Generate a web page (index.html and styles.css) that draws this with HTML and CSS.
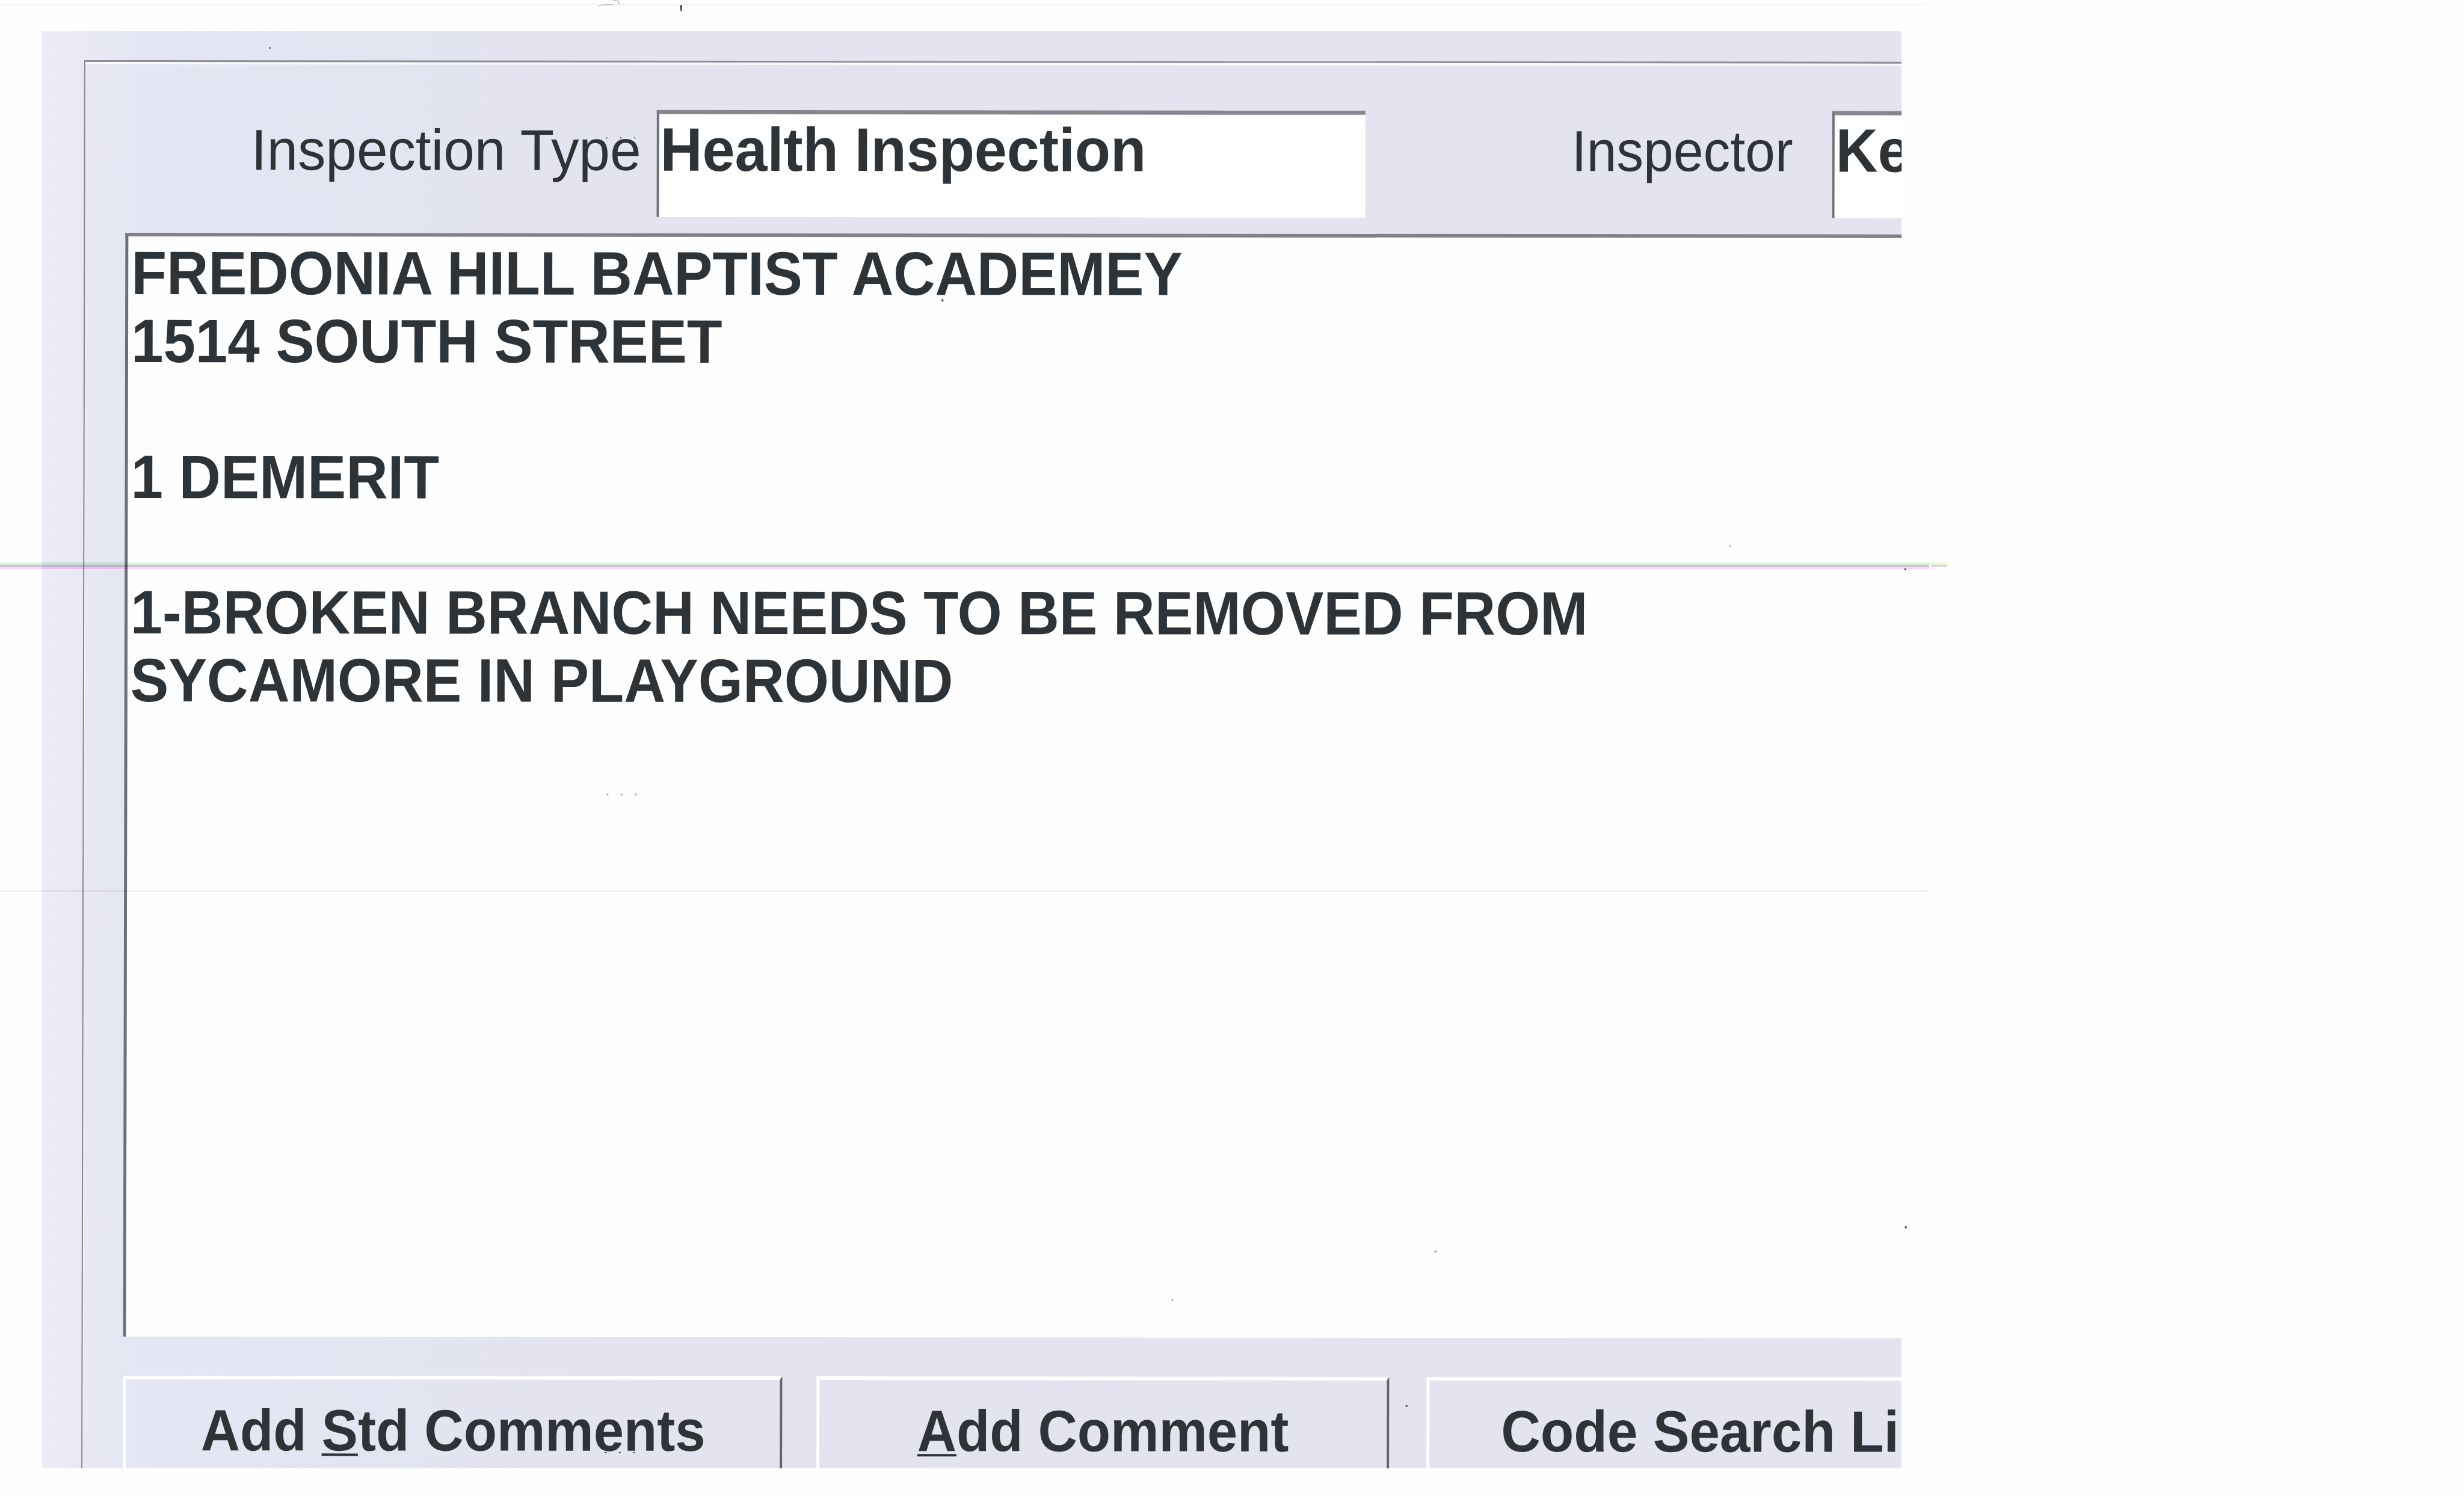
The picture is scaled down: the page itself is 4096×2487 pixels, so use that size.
FILE: index.html
```html
<!DOCTYPE html>
<html>
<head>
    <meta charset="utf-8">
    <title>Inspection Comments</title>
    <link rel="stylesheet" href="styles.css">
</head>
<body>
    <div class="panel">
        <div class="group">
            <div class="fields">
                <label class="label type-label"><span class="text">Inspection Type</span></label>
                <div class="field type-field"><span class="text">Health Inspection</span></div>
                <label class="label inspector-label"><span class="text">Inspector</span></label>
                <div class="field inspector-field"><span class="text">Ke</span></div>
            </div>
            <div class="comments">
                <p><span class="text">FREDONIA HILL BAPTIST ACADEMEY</span></p>
                <p><span class="text">1514 SOUTH STREET</span></p>
                <p></p>
                <p><span class="text">1 DEMERIT</span></p>
                <p></p>
                <p><span class="text tight">1-BROKEN BRANCH NEEDS TO BE REMOVED FROM</span></p>
                <p><span class="text tight">SYCAMORE IN PLAYGROUND</span></p>
            </div>
            <div class="buttons">
                <button class="button std"><span class="text">Add <u>S</u>td Comments</span></button>
                <button class="button add"><span class="text"><u>A</u>dd Comment</span></button>
                <button class="button search"><span class="text">Code Search Li</span></button>
            </div>
        </div>
    </div>
    <div class="streak"></div>
    <div class="streak-end"></div>
    <div class="streak-thin"></div>
    <div class="edge"></div>
    <!-- dust on the page -->
    <svg class="dust" width="4096" height="2487" viewBox="0 0 4200 2550">
        <g fill="#444">
            <path d="M1159 9h4l-1 10h-2z"/>
            <rect x="1605" y="510" width="3" height="4"/>
            <rect x="459" y="80" width="2" height="3"/>
            <rect x="3246" y="969" width="3" height="3"/>
            <rect x="3247" y="2090" width="3" height="4"/>
            <rect x="1033" y="234" width="2" height="2"/>
            <rect x="1057" y="234" width="2" height="2"/>
            <rect x="1081" y="234" width="2" height="2"/>
            <rect x="1031" y="2475" width="3" height="2"/>
            <rect x="1055" y="2475" width="3" height="2"/>
            <rect x="1079" y="2475" width="3" height="2"/>
            <rect x="2396" y="2395" width="3" height="3"/>
        </g>
        <g fill="#aaa">
            <rect x="1034" y="1353" width="3" height="3"/>
            <rect x="1058" y="1353" width="3" height="3"/>
            <rect x="1082" y="1353" width="3" height="3"/>
            <rect x="2445" y="2132" width="4" height="3"/>
            <rect x="1997" y="2215" width="3" height="3"/>
            <rect x="2948" y="929" width="2" height="3"/>
        </g>
        <path d="M1020 10l8-2h18M1045 1l8-1l3 8" fill="none" stroke="#c4c7d8" stroke-width="2"/>
    </svg>
</body>
</html>
```

FILE: styles.css
```css
body {
    margin: 0;
    width: 4096px;
    height: 2487px;
    overflow: hidden;
    position: relative;
    background-color: #fefefe;
    color: #2e3338;
    font-family: "Liberation Sans", Arial, sans-serif;
    font-size: 102px;
}
/* Visible part of the form, everything past its edge is cut off */
.panel {
    box-sizing: border-box;
    width: 3161px;
    height: 2441px;
    padding: 100px 0 0 140px;
    overflow: hidden;
    background: linear-gradient(to right, #fefefe 70px, #ebecf5 70px, #e8e9f4 140px, #e4e6f3 220px, #e3e4f0 900px);
    background-position: 0 52px;
    background-repeat: no-repeat;
}
/* The form sits very slightly crooked on the page */
.group {
    width: 3200px;
    height: 2500px;
    border-top: 3px solid #8f9097;
    border-left: 2px solid #85868c;
    box-shadow: inset 1px 4px 0 #f8f8fd;
    transform: skew(-0.12deg, 0.05deg);
    transform-origin: top left;
}
.text {
    display: inline-block;
    white-space: pre;
    transform: scaleX(0.942);
    transform-origin: left;
}
.tight {
    transform: scaleX(0.934);
}
.fields {
    display: flex;
    box-sizing: border-box;
    height: 284px;
    padding-top: 79px;
}
.label {
    box-sizing: border-box;
    flex: none;
    height: 180px;
    line-height: 133px;
    font-size: 96px;
}
.label .text {
    transform: scaleX(0.966);
}
.type-label {
    width: 950px;
    padding-left: 276px;
}
.inspector-label {
    width: 776px;
    padding-left: 343px;
}
.inspector-label .text {
    transform: scaleX(0.932);
}
.field {
    box-sizing: border-box;
    flex: none;
    height: 178px;
    line-height: 119px;
    background-color: #fff;
    border-top: 7px solid #85878c;
    border-left: 4px solid #6c7077;
    font-weight: bold;
}
.field .text {
    margin-left: 2px;
    transform: scaleX(0.95);
}
.type-field {
    width: 1178px;
}
.inspector-field {
    width: 400px;
}
.comments {
    box-sizing: border-box;
    height: 1835px;
    margin-left: 67px;
    padding: 5px 0 0 5px;
    background-color: #fefefe;
    border-top: 6px solid #808288;
    border-left: 5px solid #6c7077;
    font-weight: bold;
}
.comments p {
    margin: 0;
    height: 112.9px;
    line-height: 112.9px;
}
.buttons {
    display: flex;
    padding: 65px 0 0 67px;
}
.button {
    box-sizing: border-box;
    flex: none;
    height: 175px;
    margin-right: 57px;
    padding: 0;
    background: none;
    border: 0 solid #fff;
    border-top-width: 6px;
    border-left-width: 5px;
    border-right: 4px solid #62656b;
    color: inherit;
    font: bold 97px/169px "Liberation Sans", Arial, sans-serif;
}
.button .text {
    transform: scaleX(0.932);
    transform-origin: center;
}
.button u {
    text-decoration-thickness: 4px;
    text-underline-offset: 5px;
    text-decoration-skip-ink: none;
}
.std {
    width: 1096px;
}
.add {
    width: 952px;
    margin-right: 62px;
}
.search {
    width: 1200px;
    margin-right: 0;
    padding-left: 119px;
    text-align: left;
}
.search .text {
    transform: scaleX(0.937);
    transform-origin: left;
}
/* Scanner lines across the page */
.streak, .streak-end, .streak-thin, .edge, .dust {
    position: absolute;
    left: 0;
}
.streak {
    top: 935px;
    width: 3207px;
    height: 11px;
    background: linear-gradient(#d8f5dc 35%, #d9b6dc 35% 60%, #f6d8f8 60%);
    mix-blend-mode: multiply;
}
.streak-end {
    top: 935px;
    left: 3210px;
    width: 26px;
    height: 8px;
    background: linear-gradient(#eef6d4 50%, #e2d3ec 50%);
}
.streak-thin {
    top: 1480px;
    width: 3207px;
    height: 3px;
    background-color: #f8ecfa;
    mix-blend-mode: multiply;
}
.edge {
    top: 7px;
    width: 3200px;
    height: 2px;
    background-color: #f3f3f8;
}
.dust {
    top: 0;
}
```
